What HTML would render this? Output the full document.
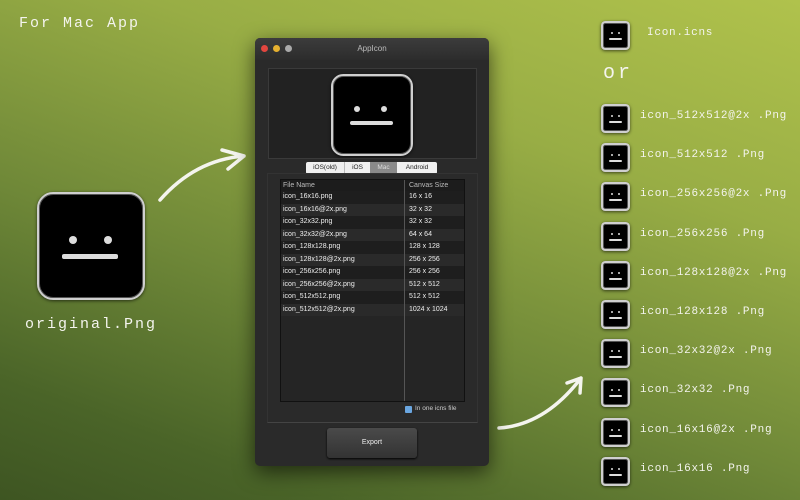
<!DOCTYPE html>
<html><head><meta charset="utf-8"><style>
body{margin:0;width:800px;height:500px;overflow:hidden;position:relative;font-family:"Liberation Sans",sans-serif;
background:linear-gradient(200deg,#b0c24c 0%,#98ad45 30%,#6f8838 60%,#4a6428 85%,#3e5522 100%);}
.hand{position:absolute;color:#f4f4ee;font-family:"Liberation Mono",monospace;white-space:nowrap}
.ic{position:absolute;background:#000;border:2px solid #cfcfcf;box-shadow:0 1px 3px rgba(0,0,0,.6),inset 0 0 0 1px #555;border-radius:15%}
.ic i{position:absolute;background:#ddd;border-radius:2px}
.win{position:absolute;left:255px;top:38px;width:234px;height:428px;background:#2a2a2a;border-radius:5px;box-shadow:0 6px 20px rgba(0,0,0,.6)}
.tb{height:22px;background:linear-gradient(#3c3c3c,#2c2c2c);border-radius:5px 5px 0 0;color:#bbb;font-size:8px;text-align:center;line-height:22px}
.dot{position:absolute;top:7px;width:7px;height:7px;border-radius:50%}
.row{height:12.5px;line-height:12.5px;font-size:7px;color:#eee;display:flex}
.row span:first-child{width:123px;padding-left:2px}
.row span:last-child{padding-left:3px}
</style></head><body>
<div class="hand" style="left:19px;top:15px;font-size:15px;letter-spacing:2px">For Mac App</div>
<div class="ic" style="left:37px;top:192px;width:104px;height:104px">
<i style="left:30px;top:42px;width:8px;height:8px;border-radius:50%"></i><i style="left:65px;top:42px;width:8px;height:8px;border-radius:50%"></i><i style="left:23px;top:60px;width:56px;height:5px"></i></div>
<div class="hand" style="left:25px;top:316px;font-size:15px;letter-spacing:2px">original.Png</div>
<svg style="position:absolute;left:0;top:0" width="800" height="500" fill="none" stroke="#f4f4ee" stroke-width="3.5" stroke-linecap="round" stroke-linejoin="round">
<path d="M160 200 Q195 160 244 156 M222 150 L244 156 L228 169"/>
<path d="M499 428 Q545 425 581 378 M567 383 L581 378 L580 393"/>
</svg>
<div class="win">
<div class="tb">AppIcon</div>
<div class="dot" style="left:6px;background:#e2463f"></div><div class="dot" style="left:18px;background:#e5b030"></div><div class="dot" style="left:30px;background:#aaa"></div>
<div style="position:absolute;left:13px;top:30px;width:207px;height:89px;background:#222;border:1px solid #3a3a3a"></div>
<div class="ic" style="left:76px;top:36px;width:78px;height:78px">
<i style="left:21px;top:30px;width:6px;height:6px;border-radius:50%"></i><i style="left:48px;top:30px;width:6px;height:6px;border-radius:50%"></i><i style="left:17px;top:45px;width:43px;height:4px"></i></div>
<div style="position:absolute;left:51px;top:124px;height:12px;display:flex;font-size:6.5px;line-height:12px;text-align:center;border-radius:2px;overflow:hidden">
<div style="width:38px;background:#f0f0f0;color:#222">iOS(old)</div><div style="width:25px;background:#f0f0f0;color:#222;border-left:1px solid #bbb">iOS</div><div style="width:27px;background:#8a8a8a;color:#ddd">Mac</div><div style="width:40px;background:#f0f0f0;color:#222">Android</div></div>
<div style="position:absolute;left:12px;top:135px;width:209px;height:248px;border:1px solid #333;border-bottom:1px solid #444"></div>
<div style="position:absolute;left:25px;top:141px;width:183px;height:221px;background:#252525;border:1px solid #111">
<div style="position:absolute;left:123px;top:0;width:1px;height:221px;background:#555"></div>
<div class="row" style="height:11px;line-height:11px;background:#1c1c1c;color:#bbb"><span>File Name</span><span>Canvas Size</span></div>
<div class="row" style="background:#1e1e1e"><span>icon_16x16.png</span><span>16 x 16</span></div>
<div class="row" style="background:#2a2a2a"><span>icon_16x16@2x.png</span><span>32 x 32</span></div>
<div class="row" style="background:#1e1e1e"><span>icon_32x32.png</span><span>32 x 32</span></div>
<div class="row" style="background:#2a2a2a"><span>icon_32x32@2x.png</span><span>64 x 64</span></div>
<div class="row" style="background:#1e1e1e"><span>icon_128x128.png</span><span>128 x 128</span></div>
<div class="row" style="background:#2a2a2a"><span>icon_128x128@2x.png</span><span>256 x 256</span></div>
<div class="row" style="background:#1e1e1e"><span>icon_256x256.png</span><span>256 x 256</span></div>
<div class="row" style="background:#2a2a2a"><span>icon_256x256@2x.png</span><span>512 x 512</span></div>
<div class="row" style="background:#1e1e1e"><span>icon_512x512.png</span><span>512 x 512</span></div>
<div class="row" style="background:#2a2a2a"><span>icon_512x512@2x.png</span><span>1024 x 1024</span></div>
</div>
<div style="position:absolute;left:150px;top:368px;width:7px;height:7px;background:#6aa6e0;border-radius:1px"></div>
<div style="position:absolute;left:160px;top:367px;font-size:6.5px;color:#ccc">In one icns file</div>
<div style="position:absolute;left:72px;top:390px;width:90px;height:30px;background:linear-gradient(#4a4a4a,#333);border-radius:3px;color:#eee;font-size:7px;text-align:center;line-height:30px;box-shadow:0 1px 2px #000">Export</div>
</div>
<div id="right"></div>
<script>
var L=[["Icon.icns",35],["icon_512x512@2x .Png",118],["icon_512x512 .Png",157],["icon_256x256@2x .Png",196],["icon_256x256 .Png",236],["icon_128x128@2x .Png",275],["icon_128x128 .Png",314],["icon_32x32@2x .Png",353],["icon_32x32 .Png",392],["icon_16x16@2x .Png",432],["icon_16x16 .Png",471]];
var h="";L.forEach(function(a,k){var y=a[1];h+='<div class="ic" style="left:601px;top:'+(y-14)+'px;width:25px;height:25px"><i style="left:8px;top:9px;width:2px;height:2px"></i><i style="left:15px;top:9px;width:2px;height:2px"></i><i style="left:6px;top:15px;width:13px;height:2px"></i></div><div class="hand" style="left:'+(k?640:647)+'px;top:'+(y-8)+'px;font-size:11px;letter-spacing:0.75px">'+a[0]+'</div>';});
h+='<div class="hand" style="left:603px;top:62px;font-size:20px;letter-spacing:3px">or</div>';
document.getElementById("right").innerHTML=h;
</script>
</body></html>
